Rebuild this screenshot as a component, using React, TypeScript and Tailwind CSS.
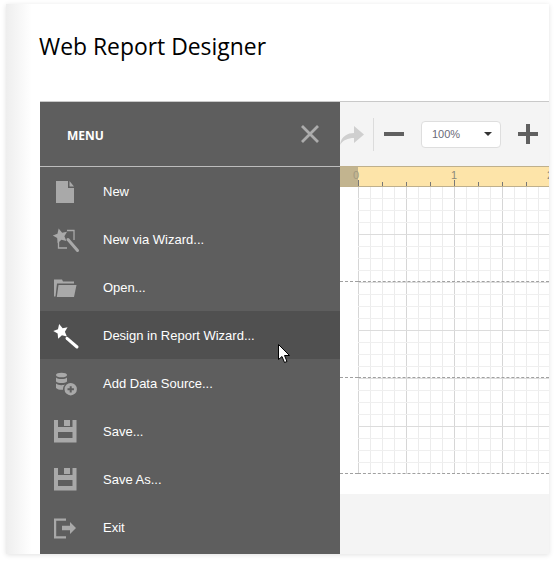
import type { ReactNode } from "react";

/* menu glyphs — all on a 24px box, fill follows currentColor */
const Star = ({ x, y }: { x: number; y: number }) => (
  <polygon
    transform={`translate(${x} ${y}) rotate(-14) scale(1.1)`}
    points="0,-7 2.200,-2.600 6.700,-2.200 3.400,1 4.100,5.700 0,3.500 -4.100,5.700 -3.400,1 -6.700,-2.200 -2.200,-2.600"
  />
);

const icons: Record<string, ReactNode> = {
  file: (
    <>
      <path d="M2 1H14V8H20V23H2Z" />
      <path d="M15.500 1 20 6.500H15.500Z" />
    </>
  ),
  wizard: (
    <>
      <Star x={6.500} y={8} />
      <path d="M13 2.500H20V12M4.500 13V20H13" fill="none" stroke="currentColor" strokeWidth="1.300" />
      <path d="M14 11.500 23.500 22.500" fill="none" stroke="currentColor" strokeWidth="3" strokeLinecap="round" />
    </>
  ),
  folder: (
    <>
      <path d="M0 3.500H8L9 5.500H20V7.500H3L1.500 20.500H0Z" />
      <path d="M4.500 9H22.500L20 21H2.800Z" />
    </>
  ),
  wand: (
    <>
      <Star x={7} y={7.500} />
      <path d="M13 14.300 23 23" fill="none" stroke="currentColor" strokeWidth="3" strokeLinecap="round" />
    </>
  ),
  data: (
    <>
      <ellipse cx="7.500" cy="3" rx="5.500" ry="2.300" />
      <path d="M2 5.500C4 7.500 11 7.500 13 5.500V9.500C11 11.500 4 11.500 2 9.500Z" />
      <path d="M2 11.500C4 13.500 9 13.500 11 12.500 9.500 14 9 15.500 9 17.800 6 18 3.500 17.500 2 16Z" />
      <path fillRule="evenodd" d="M16.700 11a6.200 6.200 0 1 0 0 12.400 6.200 6.200 0 0 0 0-12.400ZM15.700 14.200H17.700V16.200H19.900V18.200H17.700V20.400H15.700V18.200H13.500V16.200H15.700Z" />
    </>
  ),
  save: (
    <path
      fillRule="evenodd"
      d="M0 0H22.500V22.500H0ZM4 0V7H18.500V0H16V6H10V0ZM4 12V18H18.500V12Z"
    />
  ),
  exit: (
    <>
      <path d="M0 2.500H12V4.700H2.200V20.300H12V22.500H0Z" />
      <path d="M8 9.700H16V6L22 12 16 18V14.300H8Z" />
    </>
  ),
};

const items = [
  { label: "New", icon: "file" },
  { label: "New via Wizard...", icon: "wizard" },
  { label: "Open...", icon: "folder" },
  { label: "Design in Report Wizard...", icon: "wand", active: true },
  { label: "Add Data Source...", icon: "data" },
  { label: "Save...", icon: "save" },
  { label: "Save As...", icon: "save" },
  { label: "Exit", icon: "exit" },
];

function MenuRow({ label, icon, active }: { label: string; icon: string; active?: boolean }) {
  return (
    <div className={`flex h-12 items-center pl-[14px] ${active ? "bg-[#505050] text-white" : "text-[#a9a9a9]"}`}>
      <svg width="24" height="24" viewBox="0 0 24 24" fill="currentColor" className="mt-px shrink-0 overflow-visible">
        {icons[icon]}
      </svg>
      <span className="ml-[25px] mt-px font-['Liberation_Sans',sans-serif] text-[13px] text-white">{label}</span>
    </div>
  );
}

/* report surface: 12px snap grid, 48px sub-bands, dashed page bands */
function SurfaceGrid() {
  const minorV = Array.from({ length: 16 }, (_, i) => i * 12);
  const minorH = Array.from({ length: 25 }, (_, i) => -0.5 + i * 12);
  return (
    <svg width="191" height="287" className="block">
      {minorV.map((x) => (
        <line key={x} x1={x + 0.5} x2={x + 0.5} y1="0" y2="287" stroke={x % 48 === 0 ? "#d6d6d6" : "#ececec"} />
      ))}
      {minorH.map((y, i) => (
        <line key={y} x1="0" x2="191" y1={y} y2={y} stroke={i % 4 === 0 ? "#dcdcdc" : "#efefef"} />
      ))}
    </svg>
  );
}

function Ruler() {
  return (
    <div className="flex h-[21px] border-y border-[#bfb08c] bg-[#fde4a9]">
      <div className="relative h-full w-[18px] shrink-0 bg-[#c2b48f]">
        <span className="absolute left-[13px] top-[1px] font-['Liberation_Sans',sans-serif] text-[11px] leading-[14px] text-[#a39a80]">0</span>
      </div>
      <svg width="191" height="19" className="block" fontFamily="Liberation Sans, sans-serif" fontSize="11" fill="#8a8a7a">
        <text x="93" y="12">1</text>
        <text x="189" y="12">2</text>
        {Array.from({ length: 8 }, (_, i) => (
          <rect key={i} x={i * 24} y={i % 4 === 0 ? 13 : 15} width="1" height={i % 4 === 0 ? 6 : 4} fill="#777" />
        ))}
      </svg>
    </div>
  );
}

export default function App() {
  return (
    <div className="h-[562px] w-[555px] overflow-hidden bg-white pb-2 pl-[6px] pr-[6px] pt-1">
      <div className="flex h-full flex-col bg-[linear-gradient(90deg,#eeeeee_0,#ffffff_26px)] pl-[34px] shadow-[0_1px_5px_rgba(0,0,0,0.12)]">
        <h1 className="mt-[27px] h-[70px] -translate-x-px font-['Open_Sans',sans-serif] text-[22.900px] leading-[32px] text-black">Web Report Designer</h1>

        <div className="relative flex-1 border-t border-[#c9c9c9] bg-[#f4f4f4] pl-[300px]">
          {/* toolbar, partly hidden under the open menu */}
          <div className="flex h-[64px] items-center overflow-hidden">
            <svg width="24" height="24" viewBox="0 0 24 24" fill="#cfcfcf" className="mt-[1px] shrink-0">
              <path d="M0 22C1 13 8 10 14 10V3L24 11.500 14 20V15C8 15 3 17 0 22Z" />
            </svg>
            <div className="ml-[9px] h-[33px] w-px bg-[#dcdcdc]" />
            <div className="ml-[10px] h-1 w-5 bg-[#606060]" />
            <div className="ml-[17px] flex h-[27px] w-20 items-center justify-between rounded-[4px] border border-[#dedede] bg-white pl-[10px] pr-[8px] font-['Liberation_Sans',sans-serif] text-[11px] text-[#6a6a78]">
              100%
              <span className="h-0 w-0 border-x-[4px] border-t-[4px] border-x-transparent border-t-[#333]" />
            </div>
            <div className="relative ml-[17px] h-5 w-5 shrink-0">
              <div className="absolute left-0 top-2 h-1 w-5 bg-[#606060]" />
              <div className="absolute left-2 top-0 h-5 w-1 bg-[#606060]" />
            </div>
          </div>

          <Ruler />

          {/* design surface */}
          <div className="flex h-[307px] bg-white">
            <div className="relative h-[287px] w-[18px] shrink-0">
              <div className="absolute left-0 right-0 top-[94px] border-t border-dashed border-[#a0a0a0]" />
              <div className="absolute left-0 right-0 top-[190px] border-t border-dashed border-[#a0a0a0]" />
              <div className="absolute left-0 right-0 top-[286px] border-t border-dashed border-[#a0a0a0]" />
            </div>
            <div className="relative h-[287px]">
              <SurfaceGrid />
              <div className="absolute left-0 right-0 top-[94px] border-t border-dashed border-[#a0a0a0]" />
              <div className="absolute left-0 right-0 top-[190px] border-t border-dashed border-[#a0a0a0]" />
              <div className="absolute left-0 right-0 top-[286px] border-t border-dashed border-[#a0a0a0]" />
            </div>
          </div>

          {/* slide-out menu, lies over the designer */}
          <div className="absolute bottom-0 left-0 top-0 w-[300px] bg-[#5e5e5e]">
            <div className="flex h-[65px] items-center justify-between border-b border-[#bdbdbd] pl-[27px] pr-[20px]">
              <span className="mt-[3px] font-['Open_Sans',sans-serif] text-[12px] font-bold text-white">MENU</span>
              <svg width="20" height="20" viewBox="0 0 20 20" stroke="#acacac" strokeWidth="2.800">
                <path d="M2 2 18 18M18 2 2 18" />
              </svg>
            </div>
            {items.map((it) => (
              <MenuRow key={it.label} {...it} />
            ))}
            {/* mouse pointer */}
            <svg width="13" height="20" viewBox="0 0 13 20" className="absolute left-[238px] top-[242px]">
              <path d="M.5.5V15.500L4 12.500 6.500 18.500 9 17.500 6.500 11.500H11.500Z" fill="#fff" stroke="#000" />
            </svg>
          </div>
        </div>
      </div>
    </div>
  );
}
